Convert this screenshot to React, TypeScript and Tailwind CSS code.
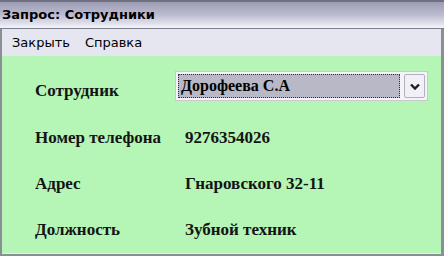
const rows = [
  { label: "Номер телефона", value: "9276354026" },
  { label: "Адрес", value: "Гнаровского 32-11" },
  { label: "Должность", value: "Зубной техник" },
]

function Chevron() {
  return (
    <svg width="10" height="7" viewBox="0 0 10 7">
      <path d="M1 1.5 L5 5.5 L9 1.5" fill="none" stroke="#1a1a2a" strokeWidth="2.4" />
    </svg>
  )
}

export default function App() {
  return (
    <div className="w-[444px] h-[256px] flex flex-col bg-[#8a8f95] overflow-hidden">
      <div className="h-[29px] flex items-center pl-[2px] border-t-2 border-t-[#6e7080] border-b border-b-[#7c7e8c] bg-gradient-to-b from-[#9c9cb4] via-[#bcbcd0] to-[#f4f4fa]">
        <span className="font-['DejaVu_Sans',sans-serif] font-bold text-[13px] text-black">
          Запрос: Сотрудники
        </span>
      </div>
      <div className="h-[27px] flex items-center gap-[15px] pl-[10px] ml-[2px] mr-[3px] bg-[#e6e6f0] font-['DejaVu_Sans',sans-serif] text-[13px] text-black">
        <span>Закрыть</span>
        <span>Справка</span>
      </div>
      <div className="flex-1 ml-[2px] mr-[3px] mb-[2px] bg-[#b5f5b5] border-b border-b-[#d8f8d8] font-['Liberation_Serif',serif] font-bold text-[17px] leading-[20px] text-[#141414]">
        <div className="flex items-start h-[59px] pt-[15px]">
          <span className="w-[173px] pl-[33px] mt-[10px]">Сотрудник</span>
          <div className="w-[253px] h-[30px] flex items-center gap-[4px] p-[2px] bg-[#f4f4f8] border border-[#c8c8d0]">
            <div className="flex-1 h-full flex items-center pl-[2px] bg-[#b8b8c6] border border-dotted border-[#303040] text-[16px] text-black">
              Дорофеева С.А
            </div>
            <div className="w-[21px] h-full flex items-center justify-center bg-[#f0f0f6] border border-[#b0b0c0] rounded-[2px]">
              <Chevron />
            </div>
          </div>
        </div>
        {rows.map((row) => (
          <div key={row.label} className="flex items-center h-[46px]">
            <span className="w-[183px] pl-[33px]">{row.label}</span>
            <span>{row.value}</span>
          </div>
        ))}
      </div>
    </div>
  )
}
